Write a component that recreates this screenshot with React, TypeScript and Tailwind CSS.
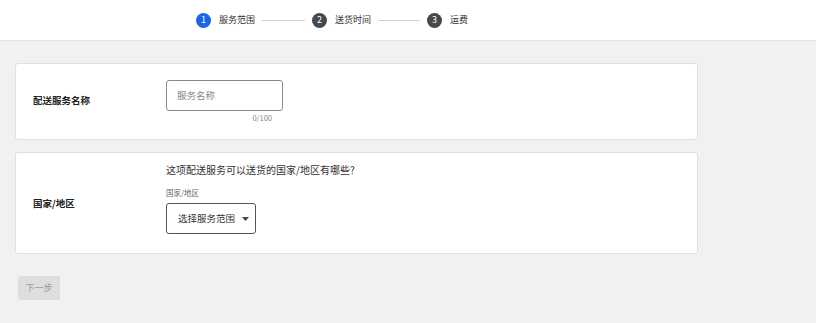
const font = { fontFamily: '"Noto Sans CJK SC", "Noto Sans", sans-serif' }

function Step({ n, label, active }: { n: number; label: string; active?: boolean }) {
  return (
    <div className="flex items-center">
      <div
        className={`w-[15px] h-[15px] rounded-full flex items-center justify-center text-[9px] text-white ${
          active ? "bg-[#1c63e8]" : "bg-[#45484c]"
        }`}
      >
        {n}
      </div>
      <span className="ml-[8px] text-[9px] text-[#333]">{label}</span>
    </div>
  )
}

export default function App() {
  return (
    <div className="w-[816px] h-[323px] bg-[#f1f1f1] flex flex-col" style={font}>
      <header className="h-[41px] bg-white border-b border-[#e3e3e3] flex items-center pl-[196px]">
        <Step n={1} label="服务范围" active />
        <div className="w-[43px] h-px bg-[#cfcfcf] mx-[7px]" />
        <Step n={2} label="送货时间" />
        <div className="w-[42px] h-px bg-[#cfcfcf] mx-[7px]" />
        <Step n={3} label="运费" />
      </header>

      <main className="pl-[15px] pt-[22px] flex flex-col gap-[12px]">
        <section className="w-[683px] h-[77px] bg-white border border-[#e0e0e0] rounded-[3px] flex pl-[17px] pt-[16px]">
          <div className="w-[133px] text-[9.5px] font-bold text-[#222] pt-[13px]">配送服务名称</div>
          <div className="flex flex-col w-[117px]">
            <div className="h-[31px] border border-[#8a8a8a] rounded-[3px] flex items-center px-[10px] text-[9.5px] text-[#888]">
              服务名称
            </div>
            <div className="text-right pr-[11px] mt-[2px] text-[7.5px] text-[#888] leading-[10px]">0/100</div>
          </div>
        </section>

        <section className="w-[683px] h-[102px] bg-white border border-[#e0e0e0] rounded-[3px] flex pl-[17px]">
          <div className="w-[133px] text-[9.5px] font-bold text-[#222] flex items-center">国家/地区</div>
          <div className="flex flex-col pt-[10px]">
            <div className="text-[10px] text-[#333] leading-[14px]">这项配送服务可以送货的国家/地区有哪些?</div>
            <div className="mt-[11px] text-[7.5px] text-[#666] leading-[10px]">国家/地区</div>
            <div className="mt-[5px] w-[90px] h-[31px] border border-[#555] rounded-[3px] flex items-center pl-[11px] text-[9.5px] text-[#333]">
              选择服务范围
              <svg width="7" height="4" viewBox="0 0 7 4" className="ml-[7px]">
                <path d="M0 0h7L3.5 4z" fill="#444" />
              </svg>
            </div>
          </div>
        </section>

        <button className="ml-[3px] mt-[10px] w-[42px] h-[24px] rounded-[3px] bg-[#dedede] text-[9px] text-[#9a9a9a]">
          下一步
        </button>
      </main>
    </div>
  )
}
